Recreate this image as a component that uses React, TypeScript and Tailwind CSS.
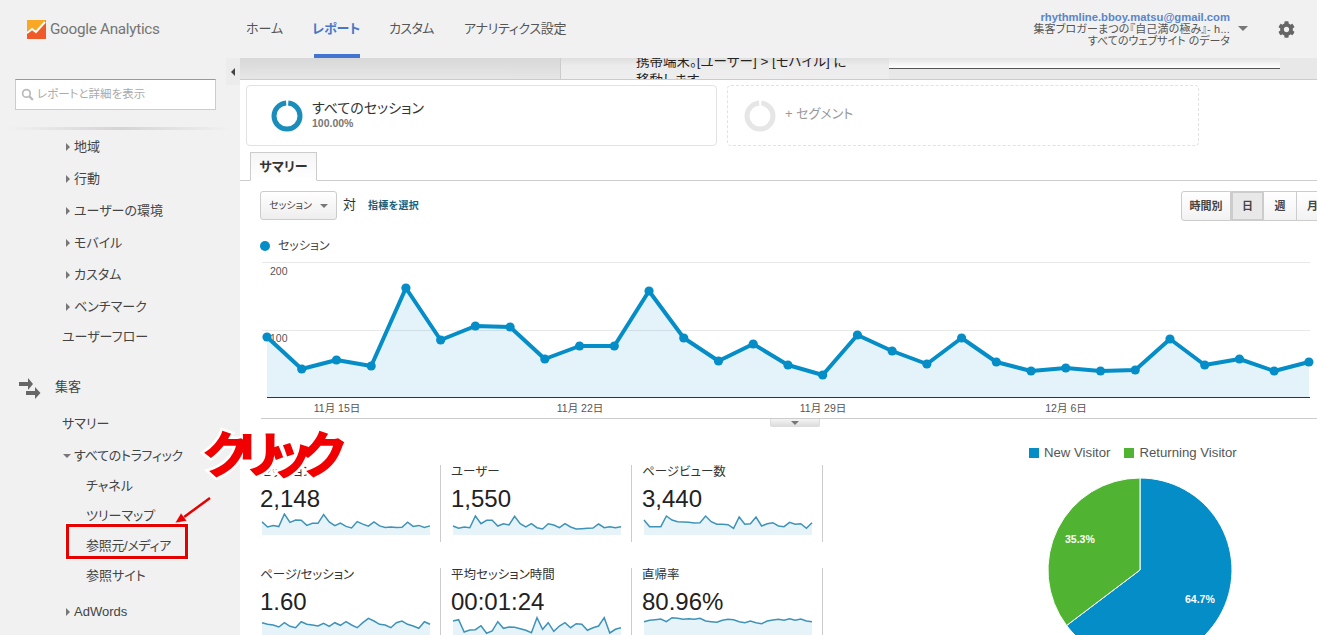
import React from "react";
import { FaCog } from "react-icons/fa";

const chart = [337, 369, 360, 366, 288, 340, 326, 327, 359, 346, 346, 291, 338, 361, 344, 365, 375, 335, 351, 364, 338, 362, 371, 368, 371, 370, 339, 365, 359, 371, 362];
const px = (i: number) => 267 + i * 34.73;
const linePts = chart.map((y, i) => `${px(i).toFixed(1)},${y}`).join(" ");

function Spark({ data, base, div = 3 }: { data: number[]; base: number; div?: number }) {
  const step = 168 / (data.length - 1);
  const pts = data.map((d, i) => `${(1 + i * step).toFixed(1)},${((d - base) / div).toFixed(1)}`).join(" ");
  return (
    <svg width="170" height="24" className="block ml-[1px]">
      <polygon points={`1,22 ${pts} 169,22`} fill="#e6f3f9" />
      <polyline points={pts} fill="none" stroke="#3f93b8" strokeWidth="1.5" />
    </svg>
  );
}

const sessionsSpark = chart.map((y) => (y - 288) * (14 / 87) + 1);

function Stat({ label, value, data, base, div, first, last }: { label: string; value: string; data: number[]; base: number; div?: number; first?: boolean; last?: boolean }) {
  return (
    <div className={`h-[77px] pl-[10px] border-l ${first ? "border-l-transparent" : "border-l-[#ccc]"} ${last ? "border-r border-r-[#ccc]" : ""}`}>
      <div className="h-[14px] leading-[14px] text-[12.5px] text-[#333]">{label}</div>
      <div className="h-[28px] mt-[6px] leading-[28px] text-[24px] text-[#222]">{value}</div>
      <Spark data={data} base={base} div={div} />
    </div>
  );
}

function RightTri() {
  return <span className="inline-block w-0 h-0 border-y-[4px] border-y-transparent border-l-[4px] border-l-[#777] mr-[4px]" />;
}

function NavRow({ label, h, pl, tri, down, extra }: { label: string; h: string; pl: string; tri?: boolean; down?: boolean; extra?: string }) {
  return (
    <div className={`flex items-center text-[13px] text-[#444] ${h} ${pl} ${extra ?? ""}`}>
      {tri && <RightTri />}
      {down && <span className="inline-block w-0 h-0 border-x-[4px] border-x-transparent border-t-[4px] border-t-[#777] mr-[3px]" />}
      <span>{label}</span>
    </div>
  );
}

function Ring({ color }: { color: string }) {
  return (
    <svg width="32" height="32" viewBox="0 0 32 32" className="shrink-0">
      <circle cx="16" cy="16" r="13" fill="none" stroke={color} strokeWidth="5" strokeDasharray="79 2.7" strokeDashoffset="-1.3" transform="rotate(-90 16 16)" />
    </svg>
  );
}

export default function App() {
  return (
    <div
      className="relative w-[1317px] h-[635px] overflow-hidden bg-white text-[#333] [font-feature-settings:'palt']"
      style={{ fontFamily: '"Liberation Sans", "Noto Sans CJK JP", sans-serif' }}
    >
      {/* Header */}
      <header className="flex items-center h-[58px] bg-[#f1f1f1]">
        <div className="flex items-center w-[246px] pl-[27px] shrink-0">
          <svg width="19" height="19" viewBox="0 0 19 19" className="shrink-0">
            <rect width="19" height="19" fill="#f9a825" />
            <polygon points="0,19 0,11 5,8 9,11 19,0 19,19" fill="#f57c2b" />
            <polygon points="0,19 0,14 5,11 9,14 19,3 19,19" fill="#f05a28" />
            <polyline points="0,13 5,9 9,12 18,2" fill="none" stroke="#fff" strokeWidth="2" />
          </svg>
          <span className="ml-[4px] text-[15.3px] tracking-[-0.3px] text-[#757575]" style={{ fontFamily: "Roboto, sans-serif" }}>Google Analytics</span>
        </div>
        <nav className="flex h-full text-[13px] text-[#555]">
          <div className="flex items-center w-[66px]">ホーム</div>
          <div className="relative flex items-center w-[77px] font-bold text-[#4a76c6]">
            レポート
            <div className="absolute left-[2px] bottom-0 w-[46px] h-[4px] bg-[#4374d0]" />
          </div>
          <div className="flex items-center w-[75px] tracking-[-0.6px]">カスタム</div>
          <div className="flex items-center tracking-[-0.3px]">アナリティクス設定</div>
        </nav>
        <div className="ml-auto flex items-center">
          <div className="text-right text-[11px] leading-[12px] text-[#555]">
            <div className="font-bold text-[11.25px] text-[#5b85c9]">rhythmline.bboy.matsu@gmail.com</div>
            <div className="tracking-[0.15px]">集客ブロガーまつの『自己満の極み』- h...</div>
            <div>すべてのウェブサイト のデータ</div>
          </div>
          <span className="ml-[8px] mb-[2px] w-0 h-0 border-x-[5px] border-x-transparent border-t-[5px] border-t-[#777]" />
          <FaCog className="ml-[30px] mr-[22px] text-[#666]" size={17} />
        </div>
      </header>

      <div className="flex h-[577px]">
        {/* Sidebar */}
        <aside className="relative w-[240px] shrink-0 bg-[#f1f1f1]">
          <div className="pl-[15px] pt-[21px]">
            <div className="flex items-center w-[201px] h-[31px] bg-white border border-[#ccc] border-t-[#999] pl-[5px] text-[11.5px] text-[#aaa]">
              <svg width="13" height="13" viewBox="0 0 12 12" className="mr-[3px]">
                <circle cx="5" cy="5" r="3.5" fill="none" stroke="#bbb" strokeWidth="1.6" />
                <line x1="7.5" y1="7.5" x2="11" y2="11" stroke="#bbb" strokeWidth="2" />
              </svg>
              レポートと詳細を表示
            </div>
          </div>
          <div className="mt-[17px] mb-[1px] mx-[8px] h-[3px] bg-gradient-to-r from-transparent via-[#d4d4d4] to-transparent" />
          <NavRow label="地域" h="h-[32px]" pl="pl-[66px]" tri />
          <NavRow label="行動" h="h-[32px]" pl="pl-[66px]" tri />
          <NavRow label="ユーザーの環境" h="h-[32px]" pl="pl-[66px]" tri />
          <NavRow label="モバイル" h="h-[32px]" pl="pl-[66px]" tri />
          <NavRow label="カスタム" h="h-[32px]" pl="pl-[66px]" tri />
          <NavRow label="ベンチマーク" h="h-[32px]" pl="pl-[66px]" tri />
          <NavRow label="ユーザーフロー" h="h-[28px]" pl="pl-[62px]" />
          <div className="flex items-center h-[32px] mt-[20px] pl-[19px] text-[13px] text-[#444]">
            <svg width="22" height="22" viewBox="0 0 22 22" className="shrink-0 mt-[2px]">
              <polygon points="0,5 9,5 9,1 14,7 9,13 9,9 0,9" fill="#666" />
              <polygon points="7,14 16,14 16,10 21.5,16 16,22 16,18 7,18" fill="#666" />
            </svg>
            <span className="ml-[14px]">集客</span>
          </div>
          <NavRow label="サマリー" h="h-[33px]" pl="pl-[62px]" extra="mt-[4px]" />
          <NavRow label="すべてのトラフィック" h="h-[31px]" pl="pl-[63px]" down extra="tracking-[-0.3px]" />
          <NavRow label="チャネル" h="h-[30px]" pl="pl-[86px]" />
          <NavRow label="ツリーマップ" h="h-[30px]" pl="pl-[86px]" />
          <NavRow label="参照元/メディア" h="h-[30px]" pl="pl-[86px]" extra="tracking-[-0.3px]" />
          <NavRow label="参照サイト" h="h-[30px]" pl="pl-[86px]" />
          <NavRow label="AdWords" h="h-[30px]" pl="pl-[66px]" tri extra="mt-[6px]" />
          <div className="absolute top-0 right-0 flex items-center justify-center w-[14px] h-[27px] bg-[#ececec]">
            <span className="w-0 h-0 border-y-[4px] border-y-transparent border-r-[4px] border-r-[#444]" />
          </div>
        </aside>

        {/* Main */}
        <main className="w-[1077px] overflow-hidden">
          <div className="flex h-[22px] bg-[#e8e8e8] border-b border-[#ccc] overflow-hidden">
            <div className="w-[321px] bg-gradient-to-b from-[#d8d8d8] to-[#e6e6e6] border-r border-[#ccc]" />
            <div className="w-[328px] pl-[75px] bg-gradient-to-b from-[#d4d4d4] via-[#ececec] to-[#eeeeee] text-[13.5px] leading-[19px] text-[#222] -mt-[6px] pt-[6px]">
              <div className="-mt-[6px] whitespace-nowrap">携帯端末。[ユーザー] &gt; [モバイル] に</div>
              <div className="whitespace-nowrap">移動します</div>
            </div>
            <div className="w-[391px] h-[11px] bg-gradient-to-b from-[#e4e4e4] to-white border-b border-[#555]" />
          </div>

          <div className="flex pl-[6px] pt-[5px]">
            <div className="flex items-center w-[471px] h-[61px] border border-[#e2e2e2] rounded-[4px] pl-[24px]">
              <Ring color="#1a8dbb" />
              <div className="ml-[9px] mb-[3px]">
                <div className="text-[14px] leading-[18px] text-[#333]">すべてのセッション</div>
                <div className="text-[10.5px] leading-[12px] font-bold text-[#777]">100.00%</div>
              </div>
            </div>
            <div className="flex items-center w-[472px] h-[61px] ml-[10px] border border-dashed border-[#e2e2e2] rounded-[4px] pl-[16px]">
              <Ring color="#e6e6e6" />
              <span className="ml-[9px] mb-[3px] text-[13px] text-[#999]">+ セグメント</span>
            </div>
          </div>

          <div className="flex h-[29px] mt-[6px] pl-[10px] border-b border-[#ccc]">
            <div className="flex items-center justify-center w-[67px] h-[29px] border border-[#ccc] border-b-white bg-gradient-to-b from-[#f5f5f5] to-white text-[13px] font-bold text-[#333]">サマリー</div>
          </div>

          <div className="flex w-[1089px] h-[30px] mt-[10px] pl-[20px]">
            <div className="flex items-center justify-between w-[77px] h-[29px] px-[8px] border border-[#ccc] rounded-[3px] bg-gradient-to-b from-white to-[#eee] text-[10px] text-[#444]">
              セッション
              <span className="w-0 h-0 border-x-[4px] border-x-transparent border-t-[4px] border-t-[#777]" />
            </div>
            <span className="ml-[6px] mt-[4px] text-[13px] text-[#333]">対</span>
            <span className="ml-[12px] mt-[7px] text-[10px] font-bold tracking-[0.3px] text-[#1a5f7a]">指標を選択</span>
            <div className="ml-auto flex h-[30px] text-[11px] font-bold text-[#444]">
              <div className="flex items-center justify-center w-[50px] border border-[#ccc] rounded-l-[3px] bg-gradient-to-b from-white to-[#f2f2f2]">時間別</div>
              <div className="flex items-center justify-center w-[33px] border-y-2 border-x-2 border-[#ccc] bg-[#e8e8e8]">日</div>
              <div className="flex items-center justify-center w-[33px] border-y border-r border-[#ccc] bg-gradient-to-b from-white to-[#f2f2f2]">週</div>
              <div className="flex items-center justify-center w-[32px] border-y border-r border-[#ccc] bg-gradient-to-b from-white to-[#f2f2f2]">月</div>
            </div>
          </div>

          <div className="flex items-center h-[34px] pl-[20px] pt-[15px] text-[12px] text-[#444]">
            <span className="w-[10px] h-[10px] rounded-full bg-[#058dc7]" />
            <span className="ml-[8px]">セッション</span>
          </div>

          <svg width="1077" height="163" viewBox="240 255 1077 163" className="block">
            <line x1="262" x2="1310" y1="262.5" y2="262.5" stroke="#e8e8e8" />
            <line x1="262" x2="1310" y1="330.5" y2="330.5" stroke="#e8e8e8" />
            <polygon points={`267,397 ${linePts} 1309,397`} fill="#058dc7" fillOpacity="0.11" />
            <text x="270" y="275" fontSize="10.5" fill="#555">200</text>
            <text x="270" y="342" fontSize="10.5" fill="#555">100</text>
            <polyline points={linePts} fill="none" stroke="#058dc7" strokeWidth="4" strokeLinejoin="round" />
            {chart.map((y, i) => (
              <circle key={i} cx={px(i)} cy={y} r="4.6" fill="#058dc7" />
            ))}
            <line x1="267" x2="1310" y1="397.5" y2="397.5" stroke="#333" />
            {[["11月 15日", 337], ["11月 22日", 580], ["11月 29日", 823], ["12月 6日", 1066]].map(([t, x]) => (
              <text key={t as string} x={x as number} y="412" fontSize="10.5" fill="#555" textAnchor="middle">{t}</text>
            ))}
          </svg>

          <div className="ml-[21px] border-t border-[#ccc]" />
          <div className="flex justify-center items-center ml-[530px] w-[50px] h-[8px] rounded-b-[2px] bg-gradient-to-b from-[#f4f4f4] to-[#ddd] border-x border-b border-[#ddd]">
            <span className="w-0 h-0 border-x-[4px] border-x-transparent border-t-[4px] border-t-[#777]" />
          </div>

          <div className="flex items-start pt-[21px]">
            <div className="grid grid-cols-[191px_191px_192px] gap-y-[26px] ml-[9px] mt-[17px]">
              <Stat first label="セッション" value="2,148" data={sessionsSpark} base={0} div={1} />
              <Stat label="ユーザー" value="1,550" base={186} data={[225, 232, 228, 230, 195, 218, 208, 208, 225, 218, 222, 196, 218, 228, 218, 230, 234, 218, 222, 230, 218, 228, 234, 233, 232, 231, 219, 230, 227, 230, 227]} />
              <Stat last label="ページビュー数" value="3,440" base={186} data={[207, 227, 227, 227, 195, 207, 212, 213, 214, 216, 215, 195, 212, 220, 220, 221, 232, 198, 220, 218, 198, 225, 218, 215, 225, 227, 214, 220, 218, 232, 215]} />
              <Stat first label="ページ/セッション" value="1.60" base={735} data={[755, 760, 762, 768, 755, 766, 770, 752, 760, 762, 765, 757, 766, 755, 763, 752, 762, 770, 755, 742, 750, 760, 762, 770, 755, 750, 760, 765, 772, 752, 760]} />
              <Stat label="平均セッション時間" value="00:01:24" base={495} data={[510, 506, 543, 537, 536, 524, 547, 540, 512, 532, 528, 529, 533, 538, 545, 500, 535, 515, 541, 525, 515, 530, 518, 520, 538, 530, 525, 500, 546, 535, 530]} />
              <Stat last label="直帰率" value="80.96%" base={495} data={[512, 508, 506, 504, 512, 500, 502, 505, 503, 505, 502, 510, 512, 514, 508, 505, 506, 512, 515, 510, 515, 518, 510, 507, 505, 508, 503, 508, 504, 510, 512]} />
            </div>
            <div className="ml-[206px] shrink-0">
              <div className="flex items-center h-[10px] text-[13.2px] text-[#555]">
                <span className="w-[10px] h-[10px] bg-[#058dc7]" />
                <span className="ml-[5px]">New Visitor</span>
                <span className="ml-[14px] w-[10px] h-[10px] bg-[#50b432]" />
                <span className="ml-[5px]">Returning Visitor</span>
              </div>
              <svg width="186" height="186" viewBox="1047 477 186 186" className="block mt-[19px] ml-[18px]">
                <path d="M1140,570 L1140,478 A92,92 0 1 1 1066.6,625.5 Z" fill="#058dc7" stroke="#fff" strokeWidth="1" />
                <path d="M1140,570 L1066.6,625.5 A92,92 0 0 1 1140,478 Z" fill="#50b432" stroke="#fff" strokeWidth="1" />
                <text x="1065" y="543" fontSize="10.5" fontWeight="700" fill="#fff">35.3%</text>
                <text x="1185" y="603" fontSize="10.5" fontWeight="700" fill="#fff">64.7%</text>
              </svg>
            </div>
          </div>
        </main>
      </div>

      {/* Annotations over the page */}
      <div className="absolute left-[66px] top-[524px] w-[122px] h-[35px] border-[3px] border-[#e60000] outline outline-1 outline-white" />
      <svg width="44" height="34" viewBox="0 0 44 34" className="absolute left-[170px] top-[494px]">
        <line x1="40" y1="4" x2="10" y2="26" stroke="#e60000" strokeWidth="2.5" />
        <polygon points="5,29 11,19 17,27" fill="#e60000" stroke="#fff" strokeWidth="0.5" />
      </svg>
      <div
        className="absolute left-[203px] top-[421px] text-[50px] leading-[60px] font-black tracking-[-11px] text-[#f00000] [-webkit-text-stroke:5px_white] [paint-order:stroke_fill]"
        style={{ fontFamily: '"Noto Sans CJK JP", sans-serif' }}
      >
        クリック
      </div>
    </div>
  );
}
